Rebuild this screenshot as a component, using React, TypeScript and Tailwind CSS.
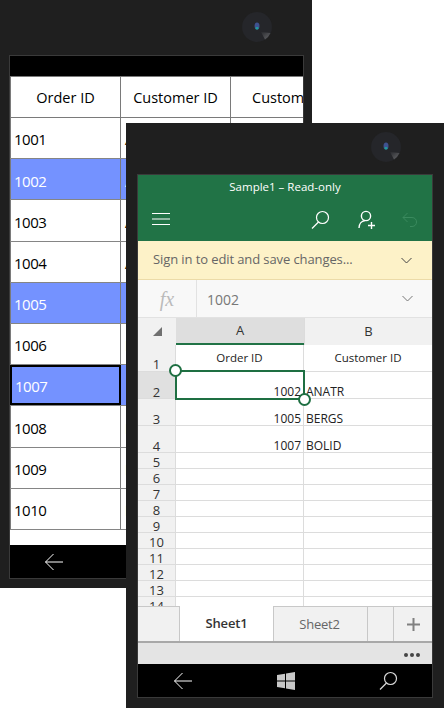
import React from "react";

const ORDERS = [1001, 1002, 1003, 1004, 1005, 1006, 1007, 1008, 1009, 1010];
const FIRST_LETTER = ["A", "A", "A", "A", "B", "B", "B", "B", "B", "B"];
const SELECTED = [1002, 1005, 1007];

const Camera = () => (
  <svg width="30" height="30" viewBox="0 0 30 30">
    <defs>
      <linearGradient id="wedge" x1="0" y1="0" x2="1" y2="1">
        <stop offset="0" stopColor="#2a2b2f" />
        <stop offset="1" stopColor="#66676a" />
      </linearGradient>
    </defs>
    <circle cx="15" cy="15" r="15" fill="#25262a" />
    <path d="M19 20L28.500 21A15 15 0 0 1 23 27.500Z" fill="url(#wedge)" />
    <ellipse cx="15" cy="14" rx="2.500" ry="3.500" fill="#3f5290" />
    <rect x="13.500" y="15" width="3" height="2.500" rx="1" fill="#1f9c9c" />
  </svg>
);

const BackArrow = () => (
  <svg width="20" height="18" viewBox="0 0 20 18" fill="none" stroke="#fff" strokeWidth="1">
    <path d="M19 9H1.500M9.500 1L1.500 9l8 8" />
  </svg>
);

const SearchIcon = ({ color = "#fff" }: { color?: string }) => (
  <svg width="19" height="19" viewBox="0 0 19 19" fill="none" stroke={color} strokeWidth="1.200">
    <circle cx="11.500" cy="7.500" r="6" />
    <path d="M7.500 12L1 18.500" />
  </svg>
);

// left phone, the data grid sample
const GridPhone = () => (
  <div className="absolute left-0 top-0 w-[312px] h-[588px] bg-[#1f1f1f]">
    <div className="absolute left-[242px] top-[12px]">
      <Camera />
    </div>
    <div className="absolute left-[9px] top-[55px] w-[295px] h-[524px] border border-[#3a3a3a] bg-white flex flex-col overflow-hidden">
      <div className="h-[20px] bg-black shrink-0" />
      <div className="flex h-[42px] shrink-0 border-y border-[#7a7a7a] text-black text-[14.500px] font-medium">
        <div className="w-[111px] shrink-0 pt-px border-x border-[#7a7a7a] flex items-center justify-center">Order ID</div>
        <div className="w-[110px] shrink-0 pt-px border-r border-[#7a7a7a] flex items-center justify-center">Customer ID</div>
        <div className="w-[110px] shrink-0 pt-px flex items-center pl-[21px] whitespace-nowrap">Customer ID</div>
      </div>
      {ORDERS.map((order, i) => {
        const isSelected = SELECTED.includes(order);
        return (
          <div
            key={order}
            className={`flex h-[41.200px] shrink-0 border-b border-[#858585] text-[15px] tracking-[-0.5px] ${
              isSelected ? "bg-[#7492ff] text-white" : "text-black"
            }`}
          >
            <div
              className={`w-[111px] shrink-0 flex items-center pl-[3px] pt-[3px] ${
                order === 1007 ? "border-2 border-black" : "border-x border-[#7a7a7a]"
              }`}
            >
              {order}
            </div>
            <div className="w-[110px] shrink-0 pl-[4px] pt-[3px] flex items-center border-r border-[#7a7a7a]">{FIRST_LETTER[i]}</div>
          </div>
        );
      })}
      <div className="flex-1" />
      <div className="h-[33px] bg-black shrink-0 flex items-center pl-[34px]">
        <BackArrow />
      </div>
    </div>
  </div>
);

const RowHead = ({ n }: { n: number }) => (
  <div className="flex shrink-0 h-[16px]">
    <div className="w-[38px] shrink-0 bg-[#f1f1f1] border-r border-b border-[#dcdcdc] flex items-end justify-center text-[13px] leading-[12px] text-[#333]">
      {n}
    </div>
    <div className="w-[128px] shrink-0 border-r border-b border-[#dcdcdc]" />
    <div className="flex-1 border-b border-[#dcdcdc]" />
  </div>
);

const DataRow = ({ n, a, b }: { n: number; a: string; b: string }) => (
  <div className="flex shrink-0 h-[27px] text-[12px] text-[#222]">
    <div
      className={`w-[38px] shrink-0 border-r border-b border-[#dcdcdc] flex items-end justify-center text-[13px] leading-[12px] text-[#333] ${
        n === 2 ? "bg-[#e0e0e0]" : "bg-[#f1f1f1]"
      }`}
    >
      {n}
    </div>
    <div className="w-[128px] shrink-0 border-r border-b border-[#dcdcdc] flex items-end justify-end pr-[2px] leading-[12px]">{a}</div>
    <div className="flex-1 border-b border-[#dcdcdc] flex items-end pl-[2px] leading-[12px]">{b}</div>
  </div>
);

// right phone, the exported workbook open in mobile Excel
const ExcelPhone = () => (
  <div className="absolute left-[126px] top-[123px] w-[318px] h-[585px] bg-[#1f1f1f]">
    <div className="absolute left-[245px] top-[9px]">
      <Camera />
    </div>
    <div className="absolute left-[12px] top-[52px] w-[294px] h-[522px] flex flex-col overflow-hidden bg-white outline outline-1 outline-[#3a3a3a]">
      <div className="h-[66px] shrink-0 bg-[#217346] flex flex-col">
        <div className="h-[24px] flex items-center justify-center text-white text-[11.500px]">Sample1 – Read-only</div>
        <div className="flex-1 flex items-center pl-[14px] pb-[2px]">
          <svg width="18" height="12" viewBox="0 0 18 12" stroke="#fff" strokeWidth="1">
            <path d="M0 .5h18M0 6h18M0 11.500h18" />
          </svg>
          <div className="ml-[141px]">
            <SearchIcon />
          </div>
          <svg className="ml-[28px]" width="18" height="19" viewBox="0 0 18 19" fill="none" stroke="#fff" strokeWidth="1.400">
            <circle cx="8" cy="6" r="4.600" />
            <path d="M1 18c0-4 2.500-7 6-7.500M10 15.500h7M13.500 12v7" />
          </svg>
          <svg className="ml-[26px]" width="16" height="15" viewBox="0 0 16 15" fill="none" stroke="#3a8a5e" strokeWidth="1">
            <path d="M5.500 1L1 5.500 5.500 10M1 5.500h9c6 0 6 9 0 9H8" />
          </svg>
        </div>
      </div>
      <div className="h-[39px] shrink-0 bg-[#fdf2c8] border-b border-[#ecdba8] flex items-center justify-between pl-[15px] pr-[20px] text-[13px] tracking-[-0.1px] text-[#666]">
        <span>Sign in to edit and save changes...</span>
        <svg width="11" height="7" viewBox="0 0 11 7" fill="none" stroke="#444" strokeWidth="1">
          <path d="M.5 1l5 5 5-5" />
        </svg>
      </div>
      <div className="h-[38px] shrink-0 bg-[#f8f8f8] border-b border-[#e2e2e2] flex items-center">
        <div className="w-[59px] h-full border-r border-[#e2e2e2] flex items-center justify-center text-[20px] italic text-[#bbbbbb] [font-family:'Liberation_Serif',serif]">
          fx
        </div>
        <div className="flex-1 pl-[10px] pt-[2px] text-[14px] text-[#777]">1002</div>
        <svg className="mr-[19px]" width="11" height="7" viewBox="0 0 11 7" fill="none" stroke="#777" strokeWidth="1">
          <path d="M.5 1l5 5 5-5" />
        </svg>
      </div>
      <div className="relative flex-1 overflow-hidden">
        <div className="flex h-[27px] text-[13px] text-[#333]">
          <div className="w-[38px] shrink-0 bg-[#f1f1f1] flex items-center justify-center">
            <svg width="9" height="9" viewBox="0 0 9 9">
              <path d="M9 0v9H0z" fill="#707070" />
            </svg>
          </div>
          <div className="w-[128px] shrink-0 bg-[#dedede] border-b-2 border-[#217346] flex items-center justify-center">A</div>
          <div className="flex-1 bg-[#f1f1f1] border-l border-[#dcdcdc] flex items-center justify-center">B</div>
        </div>
        <div className="flex h-[27px] text-[11.500px] text-[#222]">
          <div className="w-[38px] shrink-0 bg-[#f1f1f1] border-r border-b border-[#dcdcdc] flex items-end justify-center text-[13px] leading-[14px] text-[#333]">
            1
          </div>
          <div className="w-[128px] shrink-0 border-r border-b border-[#dcdcdc] flex items-center justify-center">Order ID</div>
          <div className="flex-1 border-b border-[#dcdcdc] flex items-center justify-center">Customer ID</div>
        </div>
        <DataRow n={2} a="1002" b="ANATR" />
        <DataRow n={3} a="1005" b="BERGS" />
        <DataRow n={4} a="1007" b="BOLID" />
        {[5, 6, 7, 8, 9, 10, 11, 12, 13, 14].map((n) => (
          <RowHead key={n} n={n} />
        ))}
        {/* selection box over cell A2 */}
        <div className="absolute left-[37px] top-[52px] w-[130px] h-[30px] border-2 border-[#1e6f42]" />
        <div className="absolute left-[31px] top-[46px] w-[13px] h-[13px] rounded-full bg-white border-2 border-[#1e6f42]" />
        <div className="absolute left-[160px] top-[75px] w-[13px] h-[13px] rounded-full bg-white border-2 border-[#1e6f42]" />
      </div>
      <div className="h-[37px] shrink-0 flex bg-[#f1f1f1] border-t border-[#c8c8c8] border-b-2 border-b-[#a8a8a8] relative text-[13px] tracking-[-0.2px]">
        <div className="w-[42px] border-r border-[#c8c8c8]" />
        <div className="w-[93px] bg-white -mt-px pt-px flex items-center justify-center font-semibold text-[#333]">Sheet1</div>
        <div className="w-[95px] border-x border-[#c8c8c8] pt-[2px] pr-[2px] flex items-center justify-center text-[#666]">Sheet2</div>
        <div className="w-[26px] border-r border-[#c8c8c8]" />
        <div className="flex-1 flex items-center justify-center">
          <svg width="13" height="13" viewBox="0 0 13 13" stroke="#808080" strokeWidth="2">
            <path d="M6.500 0v13M0 6.500h13" />
          </svg>
        </div>
      </div>
      <div className="h-[21px] shrink-0 bg-[#e4e4e4] flex items-center justify-end gap-[2px] pr-[12px] pt-[3px]">
        <span className="w-[4px] h-[4px] rounded-full bg-[#444]" />
        <span className="w-[4px] h-[4px] rounded-full bg-[#444]" />
        <span className="w-[4px] h-[4px] rounded-full bg-[#444]" />
      </div>
      <div className="h-[33px] shrink-0 bg-black flex items-center justify-between pl-[35px] pr-[34px]">
        <BackArrow />
        <svg width="18" height="18" viewBox="0 0 18 18" fill="#c8c8c8">
          <path d="M0 3l8-1.200V8.500H0zM9 1.600L18 0v8.500H9zM0 9.500h8v6.700L0 15zM9 9.500h9V18l-9-1.600z" />
        </svg>
        <SearchIcon color="#d8d8d8" />
      </div>
    </div>
  </div>
);

export default function App() {
  return (
    <div className="relative w-[444px] h-[708px] bg-white overflow-hidden [font-family:'Open_Sans','Noto_Sans',sans-serif]">
      <GridPhone />
      <ExcelPhone />
    </div>
  );
}
